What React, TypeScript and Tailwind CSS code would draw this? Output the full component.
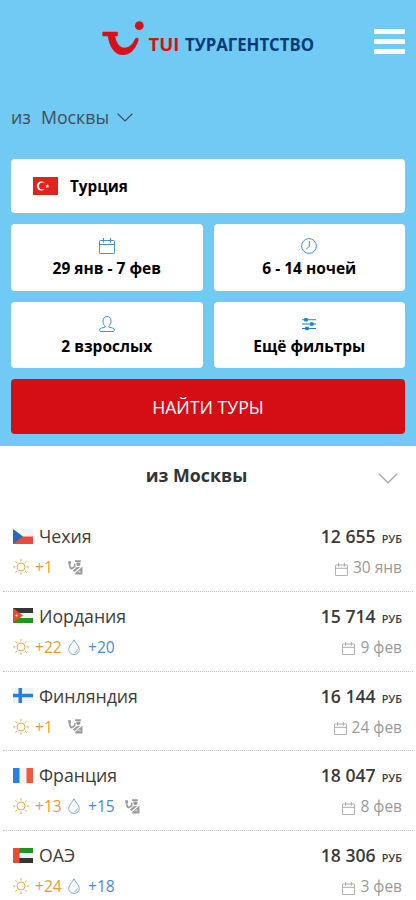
import type { ReactNode } from "react";

type Country = "cz" | "jo" | "fi" | "fr" | "ae";

type Tour = {
  code: Country;
  name: string;
  air: string;
  water?: string;
  visa?: boolean;
  price: string;
  date: string;
};

const tours: Tour[] = [
  { code: "cz", name: "Чехия", air: "+1", visa: true, price: "12 655", date: "30 янв" },
  { code: "jo", name: "Иордания", air: "+22", water: "+20", price: "15 714", date: "9 фев" },
  { code: "fi", name: "Финляндия", air: "+1", visa: true, price: "16 144", date: "24 фев" },
  { code: "fr", name: "Франция", air: "+13", water: "+15", visa: true, price: "18 047", date: "8 фев" },
  { code: "ae", name: "ОАЭ", air: "+24", water: "+18", price: "18 306", date: "3 фев" },
];

function Logo() {
  return (
    <svg width="216" height="38" viewBox="0 0 216 38" className="overflow-visible" role="img" aria-label="TUI Турагентство">
      <path
        d="M1.3 1.3Q.3 1.3.3 2.4V4.6Q.3 5.8 1.5 5.8H5.8C7 15.5 12.3 24.6 20.6 24.6C28.6 24.6 33.7 18.5 36.5 10Q37.2 7.6 35.2 7.2Q33.6 6.9 32.7 9C30.3 14 27.2 17.2 22.5 17.2C17.4 17.2 14.1 12 13.3 5.8H14.8Q15.9 5.8 15.9 4.6V2.4Q15.9 1.3 14.8 1.3Z"
        fill="#d7101b"
        transform="translate(0 10.5)"
      />
      <circle cx="37.3" cy="5.700" r="4.4" fill="#d7101b" />
      <text x="46.5" y="30.8" textLength="31" lengthAdjust="spacingAndGlyphs" className="fill-[#d7101b] font-['Open_Sans',sans-serif] text-[18px] font-bold">TUI</text>
      <text x="83" y="30.8" textLength="129" lengthAdjust="spacingAndGlyphs" className="fill-[#073b77] font-['Open_Sans',sans-serif] text-[18px] font-bold">ТУРАГЕНТСТВО</text>
    </svg>
  );
}

function Chevron({ className }: { className: string }) {
  return (
    <svg viewBox="0 0 20 11" fill="none" stroke="currentColor" className={className}>
      <path d="M.8.8 10 9.8 19.2.8" strokeWidth="1.5" />
    </svg>
  );
}

function CalendarIcon({ className }: { className: string }) {
  return (
    <svg viewBox="0 0 16 16" fill="none" stroke="currentColor" className={className}>
      <rect x=".5" y="2.5" width="15" height="13" rx=".8" />
      <path d="M.5 6.5h15M4.5 0v4.5M11.5 0v4.5" />
    </svg>
  );
}

function ClockIcon() {
  return (
    <svg width="16" height="16" viewBox="0 0 16 16" fill="none" stroke="currentColor">
      <circle cx="8" cy="8" r="7.4" />
      <path d="M8.3 3v5.5L5.3 11" />
    </svg>
  );
}

function PersonIcon() {
  return (
    <svg width="16" height="16" viewBox="0 0 16 16" fill="none" stroke="currentColor">
      <path d="M8 .5C5.4.5 4 2.4 4 5c0 2.3.8 4 2.2 5v1.1c-3 .7-5.7 1.1-5.7 3.100 0 .8.5 1.300 1.500 1.300h12c1 0 1.500-.5 1.500-1.300 0-2-2.700-2.400-5.700-3.100V10C11.200 9 12 7.300 12 5 12 2.400 10.600.5 8 .5z" />
    </svg>
  );
}

function FiltersIcon() {
  return (
    <svg width="16" height="16" viewBox="0 0 16 16" fill="#1c82c4">
      <path d="M1 3.200h14v1H1zM1 7.500h14v1H1zM1 12h14v1H1z" />
      <rect x="3.2" y="2" width="3.6" height="3.4" rx=".6" />
      <rect x="9" y="6.3" width="3.6" height="3.4" rx=".6" />
      <rect x="4.2" y="10.8" width="3.6" height="3.4" rx=".6" />
    </svg>
  );
}

function SunIcon() {
  return (
    <svg width="16" height="16" viewBox="0 0 16 16" fill="none" stroke="#e9a94e">
      <circle cx="8" cy="8" r="4" />
      <path d="M8 0v2.5M8 13.5V16M0 8h2.5M13.5 8H16M2.4 2.4l1.7 1.7M11.9 11.9l1.7 1.7M2.4 13.6l1.7-1.7M11.9 4.1l1.7-1.7" />
    </svg>
  );
}

function DropIcon() {
  return (
    <svg width="12" height="16" viewBox="0 0 12 16" fill="none" stroke="#6aa3dc" strokeWidth=".9">
      <path d="M6 .8C4.8 3.8.7 7 .7 10.4a5.3 5.1 0 0 0 10.6 0C11.3 7 7.2 3.8 6 .8z" />
      <path d="M9.3 10.5A3.3 3.3 0 0 1 6.5 13.5" />
    </svg>
  );
}

/* passport control: officer handing over a document */
function VisaIcon() {
  return (
    <svg width="15" height="15" viewBox="0 0 15 15" fill="#9b9b9b">
      <path d="M0 1.2h3v3.300H1.900L3.500 7.500 6 6.200V3.800h1.500V7.300L3.800 9.600 2 9 .8 5.500z" />
      <path d="M7 .2h5.800V2H7zM8.400 2.400h4V4.600L11.300 6H9.400L8.400 4.800z" />
      <path d="M4.800 10.800 9 7h3.200L6.600 12z" />
      <path d="M14.500 6.500v8H7.200v-1.600z" />
      <path d="m9.500 12 2.500-1.200v2" stroke="#fff" strokeWidth=".6" fill="none" />
    </svg>
  );
}

function TurkeyFlag() {
  return (
    <svg width="25" height="18" viewBox="0 0 25 18">
      <path fill="#df241d" d="M0 0h25v18H0z" />
      <circle cx="8.3" cy="9" r="4.5" fill="#fff" />
      <circle cx="9.6" cy="9" r="3.6" fill="#df241d" />
      <path fill="#fff" d="m14.3 7 .6 1.4 1.5.1-1.2 1 .4 1.5-1.3-.8-1.3.8.4-1.5-1.2-1 1.5-.1z" />
    </svg>
  );
}

const flags: Record<Country, ReactNode> = {
  cz: (
    <>
      <path fill="#f5f5f6" d="M0 0h20v15H0z" />
      <path fill="#e84c39" d="M0 7.5h20V15H0z" />
      <path fill="#2868bf" d="m0 0 10 7.500L0 15z" />
    </>
  ),
  jo: (
    <>
      <path fill="#f2f2f2" d="M0 0h20v15H0z" />
      <path fill="#363636" d="M0 0h20v5H0z" />
      <path fill="#239322" d="M0 10h20v5H0z" />
      <path fill="#e9492f" d="m0 0 10 7.500L0 15z" />
      <circle cx="3.5" cy="7.5" r="1" fill="#fff" />
    </>
  ),
  fi: (
    <>
      <path fill="#f1f2f4" d="M0 0h20v15H0z" />
      <path fill="#2481d7" d="M5.5 0h3.500v15H5.500zM0 5.800h20v3.500H0z" />
    </>
  ),
  fr: (
    <>
      <path fill="#f3f3f4" d="M0 0h20v15H0z" />
      <path fill="#2582df" d="M0 0h6.500v15H0z" />
      <path fill="#f05a38" d="M13.5 0H20v15h-6.500z" />
    </>
  ),
  ae: (
    <>
      <path fill="#f2f2f2" d="M0 0h20v15H0z" />
      <path fill="#209225" d="M6 0h14v5H6z" />
      <path fill="#343434" d="M6 10h14v5H6z" />
      <path fill="#ed4c32" d="M0 0h6.500v15H0z" />
    </>
  ),
};

function FilterCard({ icon, label }: { icon: ReactNode; label: string }) {
  return (
    <button className="flex h-[66.5px] flex-col items-center rounded-[4px] bg-white pt-[14px] text-[#4690d0]">
      {icon}
      <span className="mt-[3px] text-[15.5px] leading-[22px] font-bold text-black">{label}</span>
    </button>
  );
}

function TourRow({ tour }: { tour: Tour }) {
  return (
    <li className="mx-[3px] flex h-[79.75px] justify-between border-b border-dotted border-[#c6c6c6] pr-[11px] pl-[10px]">
      <div>
        <div className="mt-[12px] flex h-[24px] items-center">
          <svg width="20" height="15" viewBox="0 0 20 15">{flags[tour.code]}</svg>
          <span className="ml-[6px] text-[17.7px] leading-[24px] text-[#3c3c3c]">{tour.name}</span>
        </div>
        <div className="mt-[8px] flex h-[22px] items-center text-[15.6px] leading-[22px]">
          <SunIcon />
          <span className="ml-[6px] w-[33px] text-[#e49d35]">{tour.air}</span>
          {tour.water && (
            <>
              <DropIcon />
              <span className="ml-[8px] w-[37px] text-[#4b8bdc]">{tour.water}</span>
            </>
          )}
          {tour.visa && <VisaIcon />}
        </div>
      </div>
      <div className="flex flex-col items-end">
        <div className="mt-[12px] flex h-[24px] items-baseline leading-[24px] text-[#3b3b3b]">
          <span className="text-[17.6px] font-semibold">{tour.price}</span>
          <span className="ml-[6px] text-[10.8px] font-semibold">РУБ</span>
        </div>
        <div className="mt-[8px] flex h-[22px] items-center text-[15.5px] leading-[22px] text-[#999]">
          <CalendarIcon className="mt-[4px] mr-[5px] size-[13px]" />
          <span>{tour.date}</span>
        </div>
      </div>
    </li>
  );
}

export default function App() {
  return (
    <div className="h-[900px] w-full overflow-hidden bg-white font-['Open_Sans','Noto_Sans',sans-serif]">
      <section className="h-[446px] bg-[#70caf4] px-[11px]">
        <header className="flex h-[84px] items-start justify-between pt-[20px] pl-[91px]">
          <Logo />
          <button aria-label="Меню" className="mt-[9px] flex w-[31px] flex-col gap-[5px]">
            <span className="h-[5px] rounded-[1px] bg-white" />
            <span className="h-[5px] rounded-[1px] bg-white" />
            <span className="h-[5px] rounded-[1px] bg-white" />
          </button>
        </header>

        <button className="mt-[21px] flex h-[24px] items-center text-[17.8px] leading-[24px] text-[#424f56]">
          <span>из</span>
          <span className="ml-[10px]">Москвы</span>
          <Chevron className="ml-[8px] h-[9px] w-[16px]" />
        </button>

        <button className="mt-[30px] flex h-[54px] w-full items-center rounded-[4px] bg-white pl-[22px]">
          <TurkeyFlag />
          <span className="ml-[12px] text-[15.3px] font-bold text-black">Турция</span>
        </button>

        <div className="mt-[11px] grid grid-cols-2 gap-[11px]">
          <FilterCard icon={<CalendarIcon className="size-[16px]" />} label="29 янв - 7 фев" />
          <FilterCard icon={<ClockIcon />} label="6 - 14 ночей" />
          <FilterCard icon={<PersonIcon />} label="2 взрослых" />
          <FilterCard icon={<FiltersIcon />} label="Ещё фильтры" />
        </div>

        <button className="mt-[11px] h-[55px] w-full rounded-[4px] bg-[#d50d14] pt-px text-[17.7px] text-white">
          НАЙТИ ТУРЫ
        </button>
      </section>

      <div className="flex h-[66px] items-start pt-[17px] pr-[18px] text-[#333]">
        <h2 className="flex-1 pl-[15px] text-center text-[17.8px] leading-[24px] font-bold">из Москвы</h2>
        <Chevron className="mt-[10px] h-[11px] w-[20px] text-[#aaa]" />
      </div>

      <ul>
        {tours.map((tour) => (
          <TourRow key={tour.code} tour={tour} />
        ))}
      </ul>
    </div>
  );
}
